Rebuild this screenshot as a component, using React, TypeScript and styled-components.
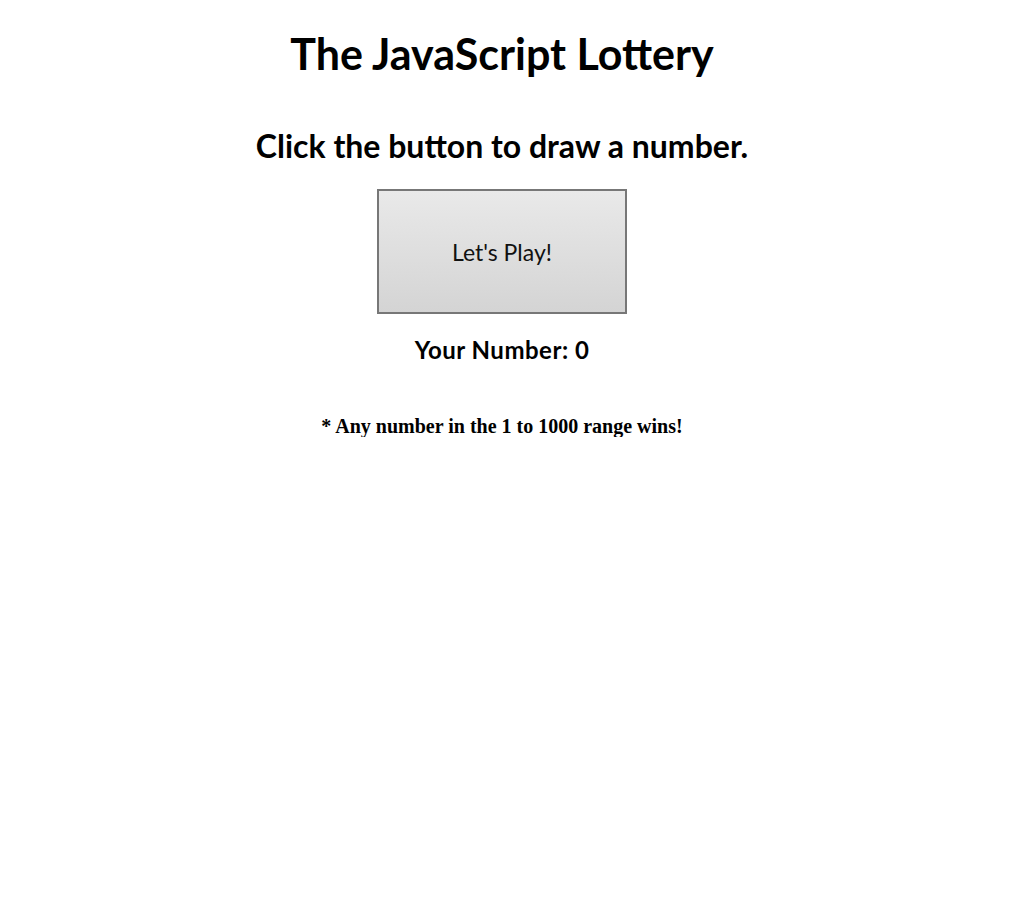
import React from "react";
import styled, { createGlobalStyle } from "styled-components";

const Global = createGlobalStyle`
  html, body { margin: 0; padding: 0; background: #fff; }
  body { font-family: Lato, "Open Sans", sans-serif; color: #000; }
`;

const Page = styled.main`
  display: flex;
  flex-direction: column;
  align-items: center;
  text-align: center;
  padding: 27px 10px 0 0;
`;

const Title = styled.h1`
  margin: 0;
  font-family: Lato, sans-serif;
  font-weight: 700;
  font-size: 43px;
  line-height: 54px;
`;

const Prompt = styled.h2`
  margin: 46px 0 0;
  font-family: Lato, sans-serif;
  font-weight: 700;
  font-size: 32px;
  line-height: 38px;
`;

const PlayButton = styled.button`
  margin-top: 24px;
  width: 250px;
  height: 125px;
  border: 2px solid #777;
  background: linear-gradient(#e9e9e9, #d4d4d4);
  font-family: Lato, sans-serif;
  font-size: 23px;
  color: #111;
  cursor: pointer;
  padding: 0;
`;

const Result = styled.h3`
  margin: 22px 0 0;
  font-family: Lato, sans-serif;
  font-weight: 700;
  font-size: 24px;
  line-height: 28px;
  letter-spacing: 0.5px;
`;

const Note = styled.p`
  margin: 51px 0 0;
  font-family: "Liberation Serif", "Times New Roman", serif;
  font-weight: 700;
  font-size: 20px;
  line-height: 22px;
`;

export default function App() {
  const [num, setNum] = React.useState(0);
  return (
    <>
      <Global />
      <Page>
        <Title>The JavaScript Lottery</Title>
        <Prompt>Click the button to draw a number.</Prompt>
        <PlayButton onClick={() => setNum(Math.floor(Math.random() * 1000) + 1)}>
          Let's Play!
        </PlayButton>
        <Result>Your Number: {num}</Result>
        <Note>* Any number in the 1 to 1000 range wins!</Note>
      </Page>
    </>
  );
}
